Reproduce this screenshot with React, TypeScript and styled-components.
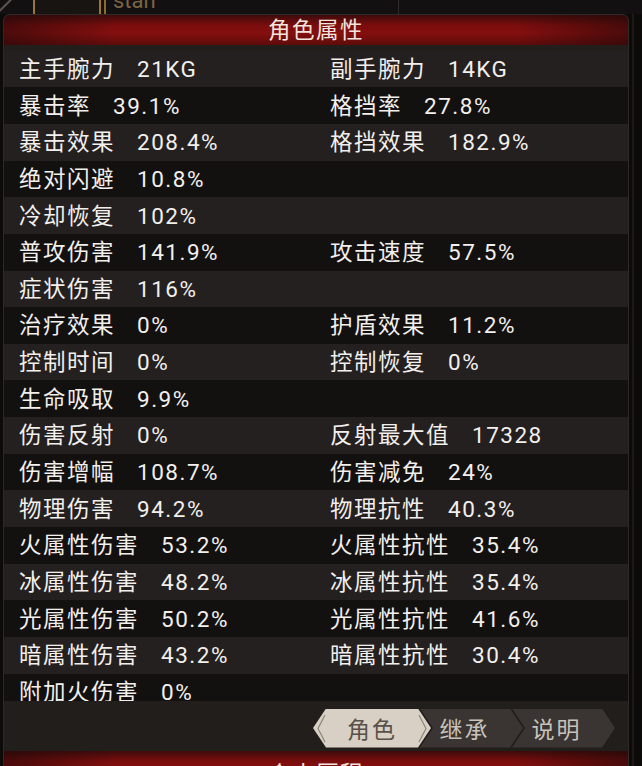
import styled, { createGlobalStyle } from "styled-components";

const GlobalStyle = createGlobalStyle`
	html, body {
		margin: 0;
		padding: 0;
		background: #0d0b0a;
	}
	* {
		box-sizing: border-box;
	}
`;

const FONT = `Roboto, "Noto Sans CJK SC", "Noto Sans", sans-serif`;

const SScreen = styled.div`
	width: 642px;
	height: 766px;
	overflow: hidden;
	background: #0d0b0a;
	font-family: ${FONT};
	display: flex;
	flex-direction: column;
`;

const STopStrip = styled.div`
	height: 14px;
	flex-shrink: 0;
	display: flex;
	align-items: flex-start;
	overflow: hidden;
	background: linear-gradient(135deg, transparent 6px, #5a5450 7px, #5a5450 8px, transparent 9px) no-repeat 0 0 / 14px 14px,
		#121010;
`;

const SNameSlot = styled.div`
	margin-left: 33px;
	width: 68px;
	height: 14px;
	border-left: 2px solid #9c7632;
	border-right: 2px solid #9c7632;
	background: #171412;
`;

const SNameText = styled.div`
	margin-left: 3px;
	margin-top: -12px;
	padding-left: 7px;
	border-left: 2px solid #8a6a30;
	font-size: 22px;
	line-height: 26px;
	color: #7c6444;
`;

const SSideRule = styled.div`
	margin-left: auto;
	margin-right: 243px;
	width: 1px;
	height: 14px;
	background: #2e2a27;
`;

const SBody = styled.div`
	flex: 1;
	display: flex;
	min-height: 0;
`;

const SPanel = styled.div`
	margin-left: 3px;
	width: 626px;
	display: flex;
	flex-direction: column;
	background: #221e1c;
	border-radius: 7px 7px 0 0;
	border: 1px solid #2f2a27;
	border-bottom: none;
	overflow: hidden;
`;

const SRightEdge = styled.div`
	margin-left: 3px;
	width: 2px;
	background: #1c1917;
`;

const SRedBar = styled.div`
	height: 30px;
	flex-shrink: 0;
	display: flex;
	justify-content: center;
	align-items: center;
	overflow: hidden;
	background: linear-gradient(to right, rgba(30, 8, 8, 0.55), rgba(0, 0, 0, 0) 18%, rgba(0, 0, 0, 0) 82%, rgba(30, 8, 8, 0.55)),
		linear-gradient(#3e0b0b, #7c0d0d 35%, #850f0f 60%, #5e0b0b);
`;

const SBarTitle = styled.div<{ clipTop?: boolean }>`
	font-size: 22.5px;
	letter-spacing: 1.5px;
	color: #f4e4de;
	line-height: 30px;
	margin-top: ${(p) => (p.clipTop ? "16px" : "0")};
`;

const SList = styled.div`
	height: 656px;
	flex-shrink: 0;
	padding-top: 5.7px;
	overflow: hidden;
`;

const SRow = styled.div<{ dark: boolean }>`
	height: 36.65px;
	display: grid;
	grid-template-columns: 311px 1fr;
	align-items: center;
	padding-left: 15px;
	background: ${(p) => (p.dark ? "#131110" : "#242020")};
`;

const SStat = styled.div`
	display: flex;
	align-items: baseline;
	gap: 22px;
	font-size: 22.5px;
	line-height: 30px;
	letter-spacing: 1.5px;
	color: #f2efec;
	white-space: nowrap;
`;

const SFooter = styled.div`
	height: 50px;
	flex-shrink: 0;
	display: flex;
	justify-content: flex-end;
	align-items: center;
	padding-right: 13px;
	padding-top: 4px;
`;

const STab = styled.div<{ active?: boolean; first?: boolean }>`
	position: relative;
	height: 39px;
	width: ${(p) => (p.active ? "118px" : "103px")};
	margin-left: ${(p) => (p.first ? "0" : "-11px")};
	display: flex;
	justify-content: center;
	align-items: center;
	padding-right: ${(p) => (p.active ? "0" : "14px")};
	font-size: 23px;
	letter-spacing: 2px;
	color: ${(p) => (p.active ? "#58504a" : "#c9c2bb")};
	background: ${(p) => (p.active ? "#d8d0c4" : "#3a3532")};
	z-index: ${(p) => (p.active ? 2 : 1)};
	clip-path: ${(p) =>
		p.active
			? "polygon(13px 0, calc(100% - 13px) 0, 100% 50%, calc(100% - 13px) 100%, 13px 100%, 0 50%)"
			: "polygon(0 0, calc(100% - 13px) 0, 100% 50%, calc(100% - 13px) 100%, 0 100%, 13px 50%)"};
`;

const STabMark = styled.svg`
	position: absolute;
	top: 0;
	left: 0;
	width: 100%;
	height: 100%;
	pointer-events: none;
`;

type Stat = [string, string];

const rows: [Stat, Stat | null][] = [
	[["主手腕力", "21KG"], ["副手腕力", "14KG"]],
	[["暴击率", "39.1%"], ["格挡率", "27.8%"]],
	[["暴击效果", "208.4%"], ["格挡效果", "182.9%"]],
	[["绝对闪避", "10.8%"], null],
	[["冷却恢复", "102%"], null],
	[["普攻伤害", "141.9%"], ["攻击速度", "57.5%"]],
	[["症状伤害", "116%"], null],
	[["治疗效果", "0%"], ["护盾效果", "11.2%"]],
	[["控制时间", "0%"], ["控制恢复", "0%"]],
	[["生命吸取", "9.9%"], null],
	[["伤害反射", "0%"], ["反射最大值", "17328"]],
	[["伤害增幅", "108.7%"], ["伤害减免", "24%"]],
	[["物理伤害", "94.2%"], ["物理抗性", "40.3%"]],
	[["火属性伤害", "53.2%"], ["火属性抗性", "35.4%"]],
	[["冰属性伤害", "48.2%"], ["冰属性抗性", "35.4%"]],
	[["光属性伤害", "50.2%"], ["光属性抗性", "41.6%"]],
	[["暗属性伤害", "43.2%"], ["暗属性抗性", "30.4%"]],
	[["附加火伤害", "0%"], null],
];

function StatCell({ stat }: { stat: Stat | null }) {
	if (!stat) return <div />;
	return (
		<SStat>
			<span>{stat[0]}</span>
			<span>{stat[1]}</span>
		</SStat>
	);
}

function Tab({ label, active, first }: { label: string; active?: boolean; first?: boolean }) {
	return (
		<STab active={active} first={first}>
			{active && (
				<STabMark viewBox="0 0 118 39" preserveAspectRatio="none">
					<polyline points="12,6 5,19.5 12,33" fill="none" stroke="#8c847a" strokeWidth="1.2" />
					<polyline points="106,6 113,19.5 106,33" fill="none" stroke="#8c847a" strokeWidth="1.2" />
				</STabMark>
			)}
			{label}
		</STab>
	);
}

export default function App() {
	return (
		<>
			<GlobalStyle />
			<SScreen>
				<STopStrip>
					<SNameSlot />
					<SNameText>stan</SNameText>
					<SSideRule />
				</STopStrip>
				<SBody>
					<SPanel>
						<SRedBar>
							<SBarTitle>角色属性</SBarTitle>
						</SRedBar>
						<SList>
							{rows.map(([left, right], i) => (
								<SRow key={i} dark={i % 2 === 1}>
									<StatCell stat={left} />
									<StatCell stat={right} />
								</SRow>
							))}
						</SList>
						<SFooter>
							<Tab label="角色" active first />
							<Tab label="继承" />
							<Tab label="说明" />
						</SFooter>
						<SRedBar>
							<SBarTitle clipTop>个人历程</SBarTitle>
						</SRedBar>
					</SPanel>
					<SRightEdge />
				</SBody>
			</SScreen>
		</>
	);
}
